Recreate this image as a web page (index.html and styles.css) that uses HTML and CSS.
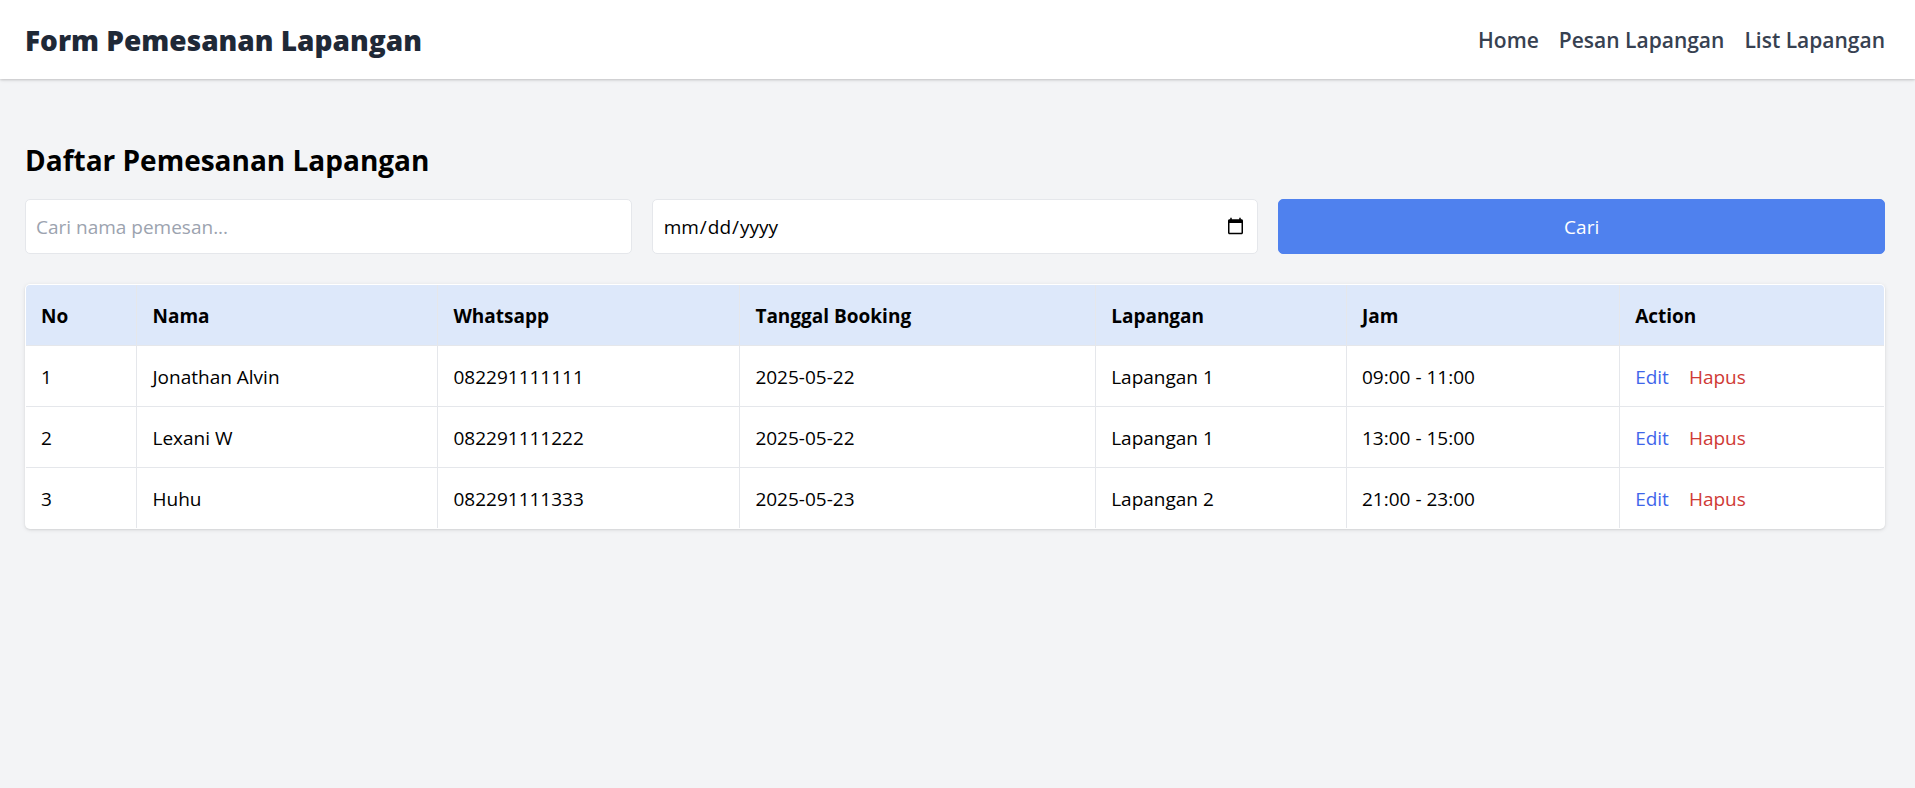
FILE: index.html
```html
<!DOCTYPE html>
<html lang="id">
<head>
<meta charset="utf-8">
<meta name="viewport" content="width=device-width, initial-scale=1">
<title>Daftar Pemesanan Lapangan</title>
<link rel="stylesheet" href="styles.css">
</head>
<body>
<header class="navbar">
  <h1 class="brand">Form Pemesanan Lapangan</h1>
  <nav class="menu">
    <a href="#home">Home</a>
    <a href="#pesan">Pesan Lapangan</a>
    <a href="#list">List Lapangan</a>
  </nav>
</header>
<main class="content">
  <h2 class="title">Daftar Pemesanan Lapangan</h2>
  <form class="search">
    <input class="field" type="text" name="nama" aria-label="Nama pemesan" placeholder="Cari nama pemesan...">
    <input class="field" type="date" name="tanggal" aria-label="Tanggal booking">
    <button class="submit" type="submit">Cari</button>
  </form>
  <div class="card">
    <table class="bookings">
      <colgroup>
        <col class="col-no"><col class="col-name"><col class="col-phone"><col class="col-date"><col class="col-field"><col class="col-time"><col>
      </colgroup>
      <thead>
        <tr><th>No</th><th>Nama</th><th>Whatsapp</th><th>Tanggal Booking</th><th>Lapangan</th><th>Jam</th><th>Action</th></tr>
      </thead>
      <tbody>
        <tr><td>1</td><td>Jonathan Alvin</td><td>082291111111</td><td>2025-05-22</td><td>Lapangan 1</td><td>09:00 - 11:00</td><td><div class="actions"><a class="edit" href="#edit-1">Edit</a><button class="delete" type="button">Hapus</button></div></td></tr>
        <tr><td>2</td><td>Lexani W</td><td>082291111222</td><td>2025-05-22</td><td>Lapangan 1</td><td>13:00 - 15:00</td><td><div class="actions"><a class="edit" href="#edit-2">Edit</a><button class="delete" type="button">Hapus</button></div></td></tr>
        <tr><td>3</td><td>Huhu</td><td>082291111333</td><td>2025-05-23</td><td>Lapangan 2</td><td>21:00 - 23:00</td><td><div class="actions"><a class="edit" href="#edit-3">Edit</a><button class="delete" type="button">Hapus</button></div></td></tr>
      </tbody>
    </table>
  </div>
</main>
</body>
</html>
```
FILE: styles.css
```css
* {
  box-sizing: border-box;
}

body {
  margin: 0;
  background: #f3f4f6;
  color: #000;
  font-family: "Open Sans", "Noto Sans", sans-serif;
  font-size: 19px;
  line-height: 30px;
}

a {
  color: inherit;
  text-decoration: none;
}

.navbar {
  display: flex;
  align-items: center;
  justify-content: space-between;
  padding: 20px 30px 19px 25px;
  background: #fff;
  box-shadow: 0 1px 4px rgba(0, 0, 0, 0.1), 0 1px 2px rgba(0, 0, 0, 0.12);
}

.brand {
  margin: 0;
  color: #1f2937;
  font-size: 28px;
  font-weight: 800;
  line-height: 40px;
}

.menu {
  display: flex;
  gap: 20px;
  color: #374151;
  font-size: 21px;
  font-weight: 600;
}

.content {
  padding: 61px 30px 60px 25px;
}

.title {
  margin: 0 0 19px;
  font-size: 28px;
  font-weight: 700;
  line-height: 40px;
}

.search {
  display: grid;
  grid-template-columns: repeat(3, 1fr);
  gap: 20px;
  margin-bottom: 30px;
}

.field,
.submit {
  min-width: 0;
  min-height: 55px;
  padding: 10px;
  border: 1px solid #e5e7eb;
  border-radius: 5px;
  background-color: #fff;
  color: #000;
  font: inherit;
}

.field::placeholder {
  color: #9ca3af;
  opacity: 1;
}

.submit {
  border-color: #4f81ee;
  background-color: #4f81ee;
  color: #fff;
}

.card {
  padding: 1px;
  border-radius: 5px;
  background: #fff;
  box-shadow: 0 1px 4px rgba(0, 0, 0, 0.1), 0 1px 2px rgba(0, 0, 0, 0.06);
  overflow: hidden;
}

.bookings {
  width: 100%;
  border-collapse: separate;
  border-spacing: 0;
  table-layout: fixed;
}

.bookings th,
.bookings td {
  padding: 16px 15px 14px;
  border: 0 solid #e5e7eb;
  border-width: 0 1px 1px 0;
  text-align: left;
}

.bookings th {
  background: #dde8fa;
  font-weight: 700;
}

.bookings th:last-child,
.bookings td:last-child {
  border-right: 0;
}

.bookings tr:last-child td {
  border-bottom: 0;
}

.bookings th:first-child {
  border-top-left-radius: 4px;
}

.bookings th:last-child {
  border-top-right-radius: 4px;
}

.col-no { width: 6%; }
.col-name { width: 16.2%; }
.col-phone { width: 16.25%; }
.col-date { width: 19.15%; }
.col-field { width: 13.5%; }
.col-time { width: 14.7%; }

.actions {
  display: flex;
  gap: 20px;
}

.edit {
  color: #3f66ea;
}

.delete {
  padding: 0;
  border: 0;
  background: none;
  color: #cf3a35;
  font: inherit;
}
```
